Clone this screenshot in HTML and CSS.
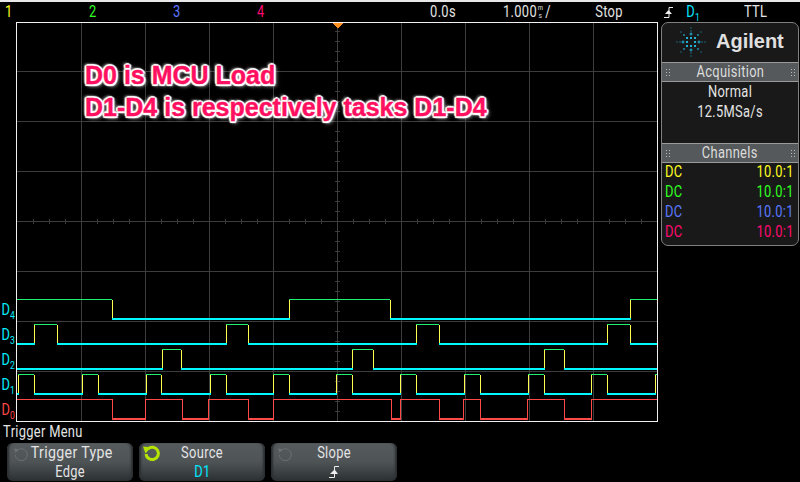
FILE: index.html
```html
<!DOCTYPE html>
<html lang="en">
<head>
<meta charset="utf-8">
<title>Agilent oscilloscope trigger menu</title>
<link rel="stylesheet" href="styles.css">
</head>
<body>
<div class="screen">
  <header class="status">
    <span class="ch ch-yellow">1</span>
    <span class="ch ch-green">2</span>
    <span class="ch ch-blue">3</span>
    <span class="ch ch-pink">4</span>
    <span class="gap"></span>
    <span class="cell">0.0s</span>
    <span class="cell scale">1.000<span class="unit"><span>m</span><span>s</span></span><span class="slash">/</span></span>
    <span class="cell">Stop</span>
    <span class="cell-icon"><svg class="edge" width="10" height="11" viewBox="0 0 10 11"><path d="M0 10.500H5V.5H9" fill="none" stroke="#eee"/><path d="M1 7H8L5 3.500H4Z" fill="#eee"/></svg></span>
    <span class="cell source">D<sub>1</sub></span>
    <span class="cell ttl">TTL</span>
  </header>

  <main class="main">
    <div class="gutter">
      <div class="dl dl-cyan">D<sub>4</sub></div>
      <div class="dl dl-cyan">D<sub>3</sub></div>
      <div class="dl dl-cyan">D<sub>2</sub></div>
      <div class="dl dl-cyan">D<sub>1</sub></div>
      <div class="dl dl-red">D<sub>0</sub></div>
    </div>

    <div class="scope">
      <svg class="plot" width="642" height="400" viewBox="16 22 642 400" shape-rendering="crispEdges">
        <path class="grid" d="M81 22V421M145 22V421M209 22V421M273 22V421M337 22V421M401 22V421M465 22V421M529 22V421M593 22V421M17 71H657M17 121H657M17 171H657M17 221H657M17 271H657M17 321H657M17 371H657"/>
        <path class="grid" d="M33 219V224M49 219V224M65 219V224M97 219V224M113 219V224M129 219V224M161 219V224M177 219V224M193 219V224M225 219V224M241 219V224M257 219V224M289 219V224M305 219V224M321 219V224M353 219V224M369 219V224M385 219V224M417 219V224M433 219V224M449 219V224M481 219V224M497 219V224M513 219V224M545 219V224M561 219V224M577 219V224M609 219V224M625 219V224M641 219V224"/>
        <path class="grid" d="M335 31H340M335 41H340M335 51H340M335 61H340M335 81H340M335 91H340M335 101H340M335 111H340M335 131H340M335 141H340M335 151H340M335 161H340M335 181H340M335 191H340M335 201H340M335 211H340M335 231H340M335 241H340M335 251H340M335 261H340M335 281H340M335 291H340M335 301H340M335 311H340M335 331H340M335 341H340M335 351H340M335 361H340M335 381H340M335 391H340M335 401H340M335 411H340"/>
        <path class="frame" d="M16.500 22V421.500M16 22.500H658M657.500 22V422M16 421.500H658"/>

        <!-- D4 -->
        <path class="sig-high" d="M17 299.500H112M289 299.500H390M630 299.500H657"/>
        <path class="sig-low" d="M112 319H290M390 319H631"/>
        <path class="sig-edge" d="M112.500 300V318M289.500 300V318M390.500 300V318M630.500 300V318"/>
        <!-- D3 -->
        <path class="sig-high" d="M34 324.500H57M226 324.500H248M416 324.500H439M607 324.500H630"/>
        <path class="sig-low" d="M17 344H35M57 344H227M248 344H417M439 344H608M630 344H657"/>
        <path class="sig-edge" d="M34.500 325V343M57.500 325V343M226.500 325V343M248.500 325V343M416.500 325V343M439.500 325V343M607.500 325V343M630.500 325V343"/>
        <!-- D2 -->
        <path class="sig-high" d="M162 349.500H181M352 349.500H373M544 349.500H564"/>
        <path class="sig-low" d="M17 369H163M181 369H353M373 369H545M564 369H657"/>
        <path class="sig-edge" d="M162.500 350V368M181.500 350V368M352.500 350V368M373.500 350V368M544.500 350V368M564.500 350V368"/>
        <!-- D1 -->
        <path class="sig-high" d="M18 374.500H34M82 374.500H98M146 374.500H161M210 374.500H226M273 374.500H289M336 374.500H352M400 374.500H416M464 374.500H480M528 374.500H544M591 374.500H607M655 374.500H657"/>
        <path class="sig-low" d="M17 394H19M34 394H83M98 394H147M161 394H211M226 394H274M289 394H337M352 394H401M416 394H465M480 394H529M544 394H592M607 394H656"/>
        <path class="sig-edge" d="M18.500 375V393M34.500 375V393M82.500 375V393M98.500 375V393M146.500 375V393M161.500 375V393M210.500 375V393M226.500 375V393M273.500 375V393M289.500 375V393M336.500 375V393M352.500 375V393M400.500 375V393M416.500 375V393M464.500 375V393M480.500 375V393M528.500 375V393M544.500 375V393M591.500 375V393M607.500 375V393M655.500 375V393"/>
        <!-- D0 -->
        <path class="sig-red" d="M17 399.500H112.500V419H145.500V399.500H182.500V419H208.500V399.500H248.500V419H273.500V399.500H391.500V419H400.500V399.500H439.500V419H463.500V399.500H480.500V419H527.500V399.500H564.500V419H591.500V399.500H657"/>
        <path class="sig-red-low" d="M112 419H146M182 419H209M248 419H274M391 419H401M439 419H464M480 419H528M564 419H592"/>

        <path class="marker" d="M332 23H343L338 28H337Z"/>
      </svg>
      <div class="note">D0 is MCU Load<br>D1-D4 is respectively tasks D1-D4</div>
    </div>

    <aside class="panel">
      <div class="brand">
        <svg class="spark" width="32" height="32" viewBox="-16 -16 32 32">
          <g fill="#22b0d6">
            <path d="M-1-1H1V1H-1Z" transform="translate(0 -4)"/><path d="M-1-1H1V1H-1Z" transform="translate(0 4)"/>
            <path d="M-1-1H1V1H-1Z" transform="translate(-4 0)"/><path d="M-1-1H1V1H-1Z" transform="translate(4 0)"/>
            <path d="M-1.500-.5H1.500V.5H-1.500ZM-.5-1.500H.5V1.500H-.5Z" transform="translate(0 -8)"/>
            <path d="M-1.500-.5H1.500V.5H-1.500ZM-.5-1.500H.5V1.500H-.5Z" transform="translate(0 8)"/>
            <path d="M-1.500-.5H1.500V.5H-1.500ZM-.5-1.500H.5V1.500H-.5Z" transform="translate(-8 0)"/>
            <path d="M-1.500-.5H1.500V.5H-1.500ZM-.5-1.500H.5V1.500H-.5Z" transform="translate(8 0)"/>
            <path d="M-.5-.5H.5V.5H-.5Z" transform="translate(0 -14)"/><path d="M-.5-.5H.5V.5H-.5Z" transform="translate(0 14)"/>
            <path d="M-.5-.5H.5V.5H-.5Z" transform="translate(-14 0)"/><path d="M-.5-.5H.5V.5H-.5Z" transform="translate(14 0)"/>
            <path d="M-.5-.5H.5V.5H-.5Z" transform="translate(0 -11)"/><path d="M-.5-.5H.5V.5H-.5Z" transform="translate(0 11)"/>
            <path d="M-.5-.5H.5V.5H-.5Z" transform="translate(-11 0)"/><path d="M-.5-.5H.5V.5H-.5Z" transform="translate(11 0)"/>
            <path d="M-1-1H1V1H-1Z" transform="translate(-4 -4)"/><path d="M-1-1H1V1H-1Z" transform="translate(4 -4)"/>
            <path d="M-1-1H1V1H-1Z" transform="translate(-4 4)"/><path d="M-1-1H1V1H-1Z" transform="translate(4 4)"/>
            <path d="M-.75-.75H.75V.75H-.75Z" transform="translate(-7 -7)"/><path d="M-.75-.75H.75V.75H-.75Z" transform="translate(7 -7)"/>
            <path d="M-.75-.75H.75V.75H-.75Z" transform="translate(-7 7)"/><path d="M-.75-.75H.75V.75H-.75Z" transform="translate(7 7)"/>
            <path d="M-.5-.5H.5V.5H-.5Z" transform="translate(-10 -10)"/><path d="M-.5-.5H.5V.5H-.5Z" transform="translate(10 -10)"/>
            <path d="M-.5-.5H.5V.5H-.5Z" transform="translate(-10 10)"/><path d="M-.5-.5H.5V.5H-.5Z" transform="translate(10 10)"/>
          </g>
        </svg>
        <span class="brand-name">Agilent</span>
      </div>
      <div class="section-head"><span class="dots"></span><span class="head-label">Acquisition</span><span class="dots"></span></div>
      <div class="acq">
        <div class="acq-line">Normal</div>
        <div class="acq-line">12.5MSa/s</div>
      </div>
      <div class="section-head"><span class="dots"></span><span class="head-label">Channels</span><span class="dots"></span></div>
      <div class="rows">
        <div class="row ch-yellow"><span class="coupling">DC</span><span class="ratio">10.0:1</span></div>
        <div class="row ch-green"><span class="coupling">DC</span><span class="ratio">10.0:1</span></div>
        <div class="row ch-blue"><span class="coupling">DC</span><span class="ratio">10.0:1</span></div>
        <div class="row ch-pink"><span class="coupling">DC</span><span class="ratio">10.0:1</span></div>
      </div>
    </aside>
  </main>

  <footer class="menu">
    <div class="menu-title">Trigger Menu</div>
    <div class="keys">
      <div class="key">
        <svg class="knob" width="16" height="16" viewBox="0 0 16 16"><path class="knob-dim" d="M4 4.500A6 6 0 1 1 2.300 9"/><path class="knob-dim-head" d="M1 2.500L6 3L2.500 7Z"/></svg>
        <div class="key-label key-label-wide">Trigger Type</div>
        <div class="key-value"><span class="key-text">Edge</span></div>
      </div>
      <div class="key">
        <svg class="knob knob-large" width="18" height="18" viewBox="0 0 18 18"><path class="knob-on" d="M5 4.800A6.200 6.200 0 1 1 3 10"/><path class="knob-on-head" d="M0 2.500L8 3.200L2.500 9.500Z"/></svg>
        <div class="key-label">Source</div>
        <div class="key-value key-cyan"><span class="key-text">D1</span></div>
      </div>
      <div class="key">
        <svg class="knob" width="16" height="16" viewBox="0 0 16 16"><path class="knob-dim" d="M4 4.500A6 6 0 1 1 2.300 9"/><path class="knob-dim-head" d="M1 2.500L6 3L2.500 7Z"/></svg>
        <div class="key-label">Slope</div>
        <div class="key-value"><svg class="edge" width="11" height="12" viewBox="0 0 11 12"><path d="M0 11.500H5.500V.5H10" fill="none" stroke="#eee"/><path d="M1 8H9L6 4H5Z" fill="#eee"/></svg></div>
      </div>
    </div>
  </footer>
</div>
</body>
</html>
```

FILE: styles.css
```css
* { box-sizing: border-box; }

html, body { margin: 0; padding: 0; background: #000; }

.screen {
  width: 800px;
  height: 482px;
  overflow: hidden;
  display: flex;
  flex-direction: column;
  background: #000;
  color: #e4e4e4;
  font-family: "Roboto", "Liberation Sans", sans-serif;
  font-weight: 400;
  font-size: 16.5px;
  letter-spacing: .4px;
  border-top: 2px solid #e8e8e8;
}

/* the instrument's font is tall and narrow */
.ch, .cell, .head-label, .acq-line, .coupling, .ratio, .menu-title, .dl {
  transform: scaleX(.78);
}

/* status line */
.status {
  height: 20px;
  flex: none;
  display: grid;
  grid-template-columns: repeat(4, 84px) 52px 100px 68px 96px 23px 24px 1fr;
  padding-left: 5px;
  align-items: center;
  line-height: 20px;
}
.ch { transform-origin: left center; }
.cell { text-align: center; white-space: nowrap; }
.scale { display: flex; justify-content: center; align-items: center; }
.unit {
  display: inline-flex;
  flex-direction: column;
  font-family: "Liberation Sans", sans-serif;
  font-size: 8px;
  line-height: 8px;
  letter-spacing: 0;
  text-align: center;
  margin: 0 1px;
}
.slash { margin-left: 2px; }
.edge { display: block; margin: 0 auto; }
.source { color: #00e8ff; padding-left: 3px; }
.ttl { text-align: left; padding-left: 40px; transform-origin: 40px center; }
sub { font-size: 11px; line-height: 0; vertical-align: -4px; }

.ch-yellow { color: #ffff20; }
.ch-green { color: #30ff20; }
.ch-blue { color: #5a78ff; }
.ch-pink { color: #ff0a70; }

/* main area */
.main {
  height: 400px;
  flex: none;
  display: flex;
  align-items: flex-start;
}
.gutter {
  width: 16px;
  height: 400px;
  flex: none;
  display: flex;
  flex-direction: column;
  justify-content: flex-end;
}
.dl {
  height: 25px;
  line-height: 25px;
  padding-left: 2px;
  letter-spacing: 0;
  white-space: nowrap;
  transform-origin: left center;
}
.dl-cyan { color: #00f0ff; }
.dl-red { color: #ff4848; }

.scope {
  position: relative;
  width: 642px;
  height: 400px;
  flex: none;
}
.plot { display: block; }
.grid { stroke: #3c3c3c; stroke-width: 1; fill: none; }
.frame { stroke: #f0f0f0; stroke-width: 1; fill: none; }
.sig-high { stroke: #20f070; stroke-width: 1; fill: none; }
.sig-low { stroke: #00f8ff; stroke-width: 2; fill: none; }
.sig-edge { stroke: #ffff50; stroke-width: 1; fill: none; }
.sig-red { stroke: #ff4848; stroke-width: 1; fill: none; }
.sig-red-low { stroke: #ff4848; stroke-width: 2; fill: none; }
.marker { fill: #ff9020; }

.note {
  position: absolute;
  left: 69px;
  top: 37px;
  font-family: "Liberation Sans", sans-serif;
  font-weight: 700;
  font-size: 25px;
  line-height: 32px;
  letter-spacing: 0;
  color: #ff1060;
  white-space: nowrap;
  -webkit-text-stroke: .4px #ff1060;
  text-shadow:
    2px 0 1px #fff, -2px 0 1px #fff, 0 2px 1px #fff, 0 -2px 1px #fff,
    1.5px 1.5px 1px #fff, -1.5px 1.5px 1px #fff, 1.5px -1.5px 1px #fff, -1.5px -1.5px 1px #fff,
    2px 2px 4px #ccc, -2px -2px 3px #999;
}

/* side panel */
.panel {
  width: 138px;
  height: 224px;
  flex: none;
  margin-left: 3px;
  background: #191919;
  border: 1px solid #808080;
  border-radius: 7px;
  display: flex;
  flex-direction: column;
  overflow: hidden;
}
.brand {
  height: 39px;
  flex: none;
  display: flex;
  align-items: center;
  padding: 0 0 2px 13px;
  gap: 9px;
}
.spark { display: block; flex: none; }
.brand-name {
  font-family: "Liberation Sans", sans-serif;
  font-weight: 700;
  font-size: 20px;
  letter-spacing: 0;
  color: #e0e0e0;
}
.section-head {
  height: 20px;
  flex: none;
  display: flex;
  align-items: center;
  justify-content: space-between;
  padding: 0 3px;
  background: #56595b;
  border-top: 1px solid #9a9a9a;
  border-bottom: 1px solid #9a9a9a;
  line-height: 18px;
  color: #dcdcdc;
}
.dots {
  width: 5px;
  height: 8px;
  background-image: radial-gradient(circle, #bbb 0 .7px, transparent 1px);
  background-size: 3px 3px;
}
.acq {
  height: 61px;
  flex: none;
  text-align: center;
  line-height: 20px;
}
.rows { margin-top: -1px; }
.row {
  height: 20px;
  line-height: 20px;
  display: flex;
  justify-content: space-between;
  padding: 0 4px 0 3px;
}
.coupling { transform-origin: left center; }
.ratio { transform-origin: right center; }

/* bottom menu */
.menu {
  flex: 1;
  display: flex;
  flex-direction: column;
}
.menu-title {
  height: 21px;
  flex: none;
  padding-left: 4px;
  line-height: 20px;
  transform-origin: left center;
}
.keys {
  display: flex;
  gap: 6px;
  padding-left: 7px;
}
.key {
  position: relative;
  width: 126px;
  height: 38px;
  flex: none;
  text-align: center;
  border-radius: 6px;
  background: linear-gradient(#565b5e 0%, #4e5356 50%, #2b3033 100%);
  box-shadow: inset 3px 0 2px -1px #2c2f31, inset -3px 0 2px -1px #2c2f31;
}
.key-label, .key-value { height: 19px; line-height: 19px; }
.key-label, .key-text { transform: scaleX(.78); }
.key-text { display: block; }
.key-label-wide { padding-left: 4px; transform: scaleX(.86); }
.key-cyan { color: #00e8ff; }
.key-value { display: flex; align-items: center; justify-content: center; }
.knob { position: absolute; left: 6px; top: 3px; }
.knob-large { left: 4px; top: 1px; }
.knob-dim { fill: none; stroke: #6c7073; stroke-width: 1; }
.knob-dim-head { fill: #6c7073; }
.knob-on { fill: none; stroke: #b4e400; stroke-width: 3; }
.knob-on-head { fill: #b4e400; }
```
